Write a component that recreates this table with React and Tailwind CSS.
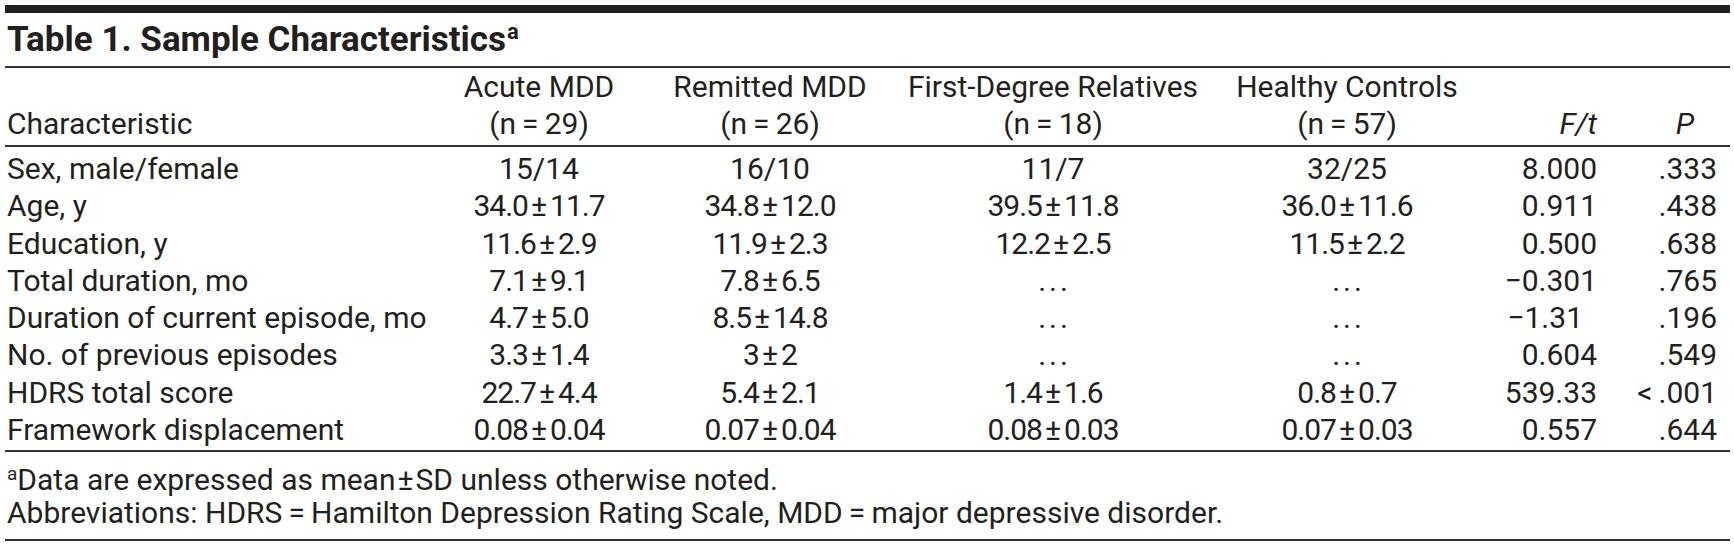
import React from "react";

const pm = (a, b) => ({ a, b });
const D = "dots";

const rows = [
  ["Sex, male/female", "15/14", "16/10", "11/7", "32/25", "8.000", ".333"],
  ["Age, y", pm("34.0", "11.7"), pm("34.8", "12.0"), pm("39.5", "11.8"), pm("36.0", "11.6"), "0.911", ".438"],
  ["Education, y", pm("11.6", "2.9"), pm("11.9", "2.3"), pm("12.2", "2.5"), pm("11.5", "2.2"), "0.500", ".638"],
  ["Total duration, mo", pm("7.1", "9.1"), pm("7.8", "6.5"), D, D, "\u22120.301", ".765"],
  ["Duration of current episode, mo", pm("4.7", "5.0"), pm("8.5", "14.8"), D, D, "\u22121.31", ".196"],
  ["No. of previous episodes", pm("3.3", "1.4"), pm("3", "2"), D, D, "0.604", ".549"],
  ["HDRS total score", pm("22.7", "4.4"), pm("5.4", "2.1"), pm("1.4", "1.6"), pm("0.8", "0.7"), "539.33", "<\u2009.001"],
  ["Framework displacement", pm("0.08", "0.04"), pm("0.07", "0.04"), pm("0.08", "0.03"), pm("0.07", "0.03"), "0.557", ".644"],
];

function Val({ v }) {
  if (v === D) return <span className="tracking-[3px] pl-[3px]">...</span>;
  if (typeof v === "object")
    return (
      <span>
        <span className="tracking-[-1px]">{v.a}</span>
        <span className="mx-[3px]">±</span>
        <span className="tracking-[-1px]">{v.b}</span>
      </span>
    );
  return <span>{v}</span>;
}

const grid = "grid grid-cols-[419px_230px_232px_334px_254px_123px_133px]";

export default function App() {
  return (
    <div
      className="w-[1734px] h-[549px] bg-white pl-[5px] pr-[4px] pt-[5px] text-[#231f20] overflow-hidden"
      style={{ fontFamily: "Roboto, 'Noto Sans', sans-serif" }}
    >
      <div className="h-[8px] bg-[#231f20]" />
      <div className="h-[53px] leading-[53px] text-[35px] font-bold pl-[2px] whitespace-nowrap">
        Table 1. Sample Characteristics
        <span className="text-[22px] leading-[0] align-[12px] font-bold ml-[1px]">a</span>
      </div>
      <div className="h-[2px] bg-[#333]" />
      <div className={`${grid} pt-0 pb-[3px] text-[30px] leading-[37px] whitespace-nowrap`}>
        <div className="pl-[2px] flex flex-col">
          <span>&nbsp;</span>
          <span>Characteristic</span>
        </div>
        <div className="flex flex-col items-center">
          <span>Acute MDD</span>
          <span>(n{"\u2009=\u2009"}29)</span>
        </div>
        <div className="flex flex-col items-center">
          <span>Remitted MDD</span>
          <span>(n{"\u2009=\u2009"}26)</span>
        </div>
        <div className="flex flex-col items-center">
          <span>First-Degree Relatives</span>
          <span>(n{"\u2009=\u2009"}18)</span>
        </div>
        <div className="flex flex-col items-center">
          <span>Healthy Controls</span>
          <span>(n{"\u2009=\u2009"}57)</span>
        </div>
        <div className="flex flex-col items-end">
          <span>&nbsp;</span>
          <span className="italic">F/t</span>
        </div>
        <div className="flex flex-col items-end pr-[36px]">
          <span>&nbsp;</span>
          <span className="italic">P</span>
        </div>
      </div>
      <div className="h-[2px] bg-[#333]" />
      <div className="pt-[3px] pb-[2px] text-[30px] leading-[37.3px] whitespace-nowrap">
        {rows.map((r, i) => (
          <div key={i} className={`${grid} h-[37.3px]`}>
            <div className="pl-[2px]">{r[0]}</div>
            <div className="text-center"><Val v={r[1]} /></div>
            <div className="text-center"><Val v={r[2]} /></div>
            <div className="text-center"><Val v={r[3]} /></div>
            <div className="text-center"><Val v={r[4]} /></div>
            <div className={r[5] === "\u22121.31" ? "text-right pr-[14px]" : "text-right"}>{r[5]}</div>
            <div className="text-right pr-[13px]">{r[6]}</div>
          </div>
        ))}
      </div>
      <div className="h-[2px] bg-[#333]" />
      <div className="pt-[11px] pb-[10px] text-[30px] leading-[33px] pl-[2px] whitespace-nowrap">
        <div>
          <span className="text-[19px] leading-[0] align-[10px]">a</span>Data are expressed as mean
          <span className="mx-[2px]">±</span>SD unless otherwise noted.
        </div>
        <div>
          Abbreviations: HDRS{"\u2009=\u2009"}Hamilton Depression Rating Scale, MDD{"\u2009=\u2009"}major depressive disorder.
        </div>
      </div>
      <div className="h-[2px] bg-[#333]" />
    </div>
  );
}
